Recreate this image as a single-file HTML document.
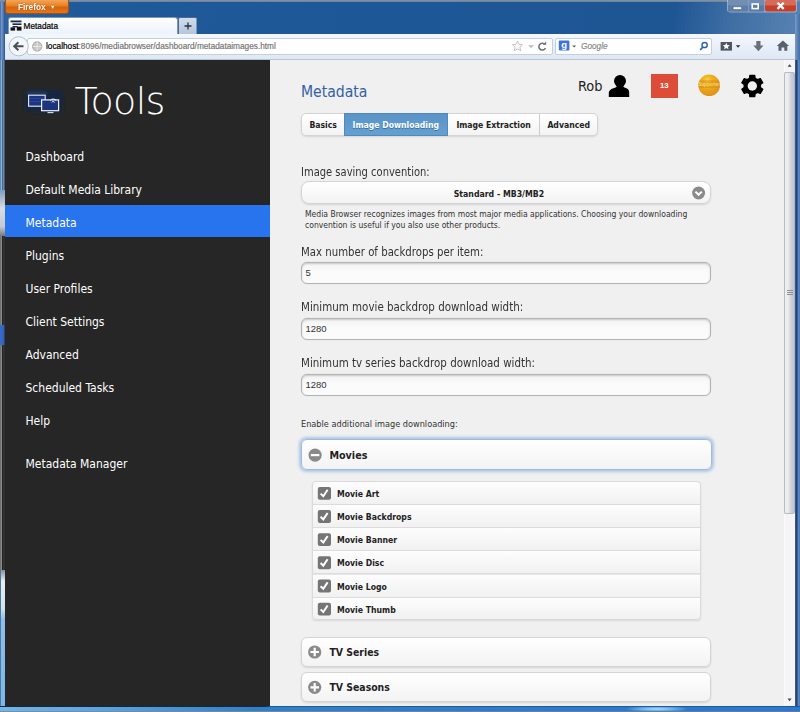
<!DOCTYPE html>
<html lang="en"><head><meta charset="utf-8"><title>Metadata</title>
<style>
*{box-sizing:border-box;margin:0;padding:0}
html,body{width:800px;height:712px;overflow:hidden}
body{position:relative;background:#1e5694;font-family:"DejaVu Sans Condensed","DejaVu Sans","Liberation Sans",sans-serif;color:#333}
.a{position:absolute;white-space:nowrap}
/* ---------- window chrome ---------- */
#titlebar{left:0;top:0;width:800px;height:36px;background:linear-gradient(100deg,#2c64a4 0,#1f5997 10%,#1e5694 84%,#3f6ea4 91%,#5882b2 100%)}
#topline{left:0;top:0;width:800px;height:2.2px;background:linear-gradient(#8e99a6,#6f86a3);opacity:.9}
#ffbtn{left:4.5px;top:0;width:64.5px;height:13.5px;border-radius:0 0 3px 3px;background:linear-gradient(#f3a55a,#e8801f 45%,#d9620c 55%,#e07a1c);border:1px solid #a8500c;border-top:0;color:#fff;font:bold 8.3px/12px "Liberation Sans",sans-serif;text-shadow:0 0 1px #8a3c00}
#tab{left:7.6px;top:16.8px;width:170px;height:19px;border-radius:3px 3px 0 0;background:linear-gradient(#fdfeff,#eaf1f9);border:1px solid #7f97b5;border-bottom:0}
#newtab{left:178px;top:17px;width:19px;height:17px;border-radius:2px 2px 0 0;background:linear-gradient(#cfdcec,#b4c6dc);border:1px solid #4d6c94;border-bottom:0;border-right-color:#7f99b9}
#navbar{left:5px;top:34px;width:789.6px;height:25.5px;background:linear-gradient(#f4f8fd,#e6eef8 60%,#dfe8f4);border-bottom:1px solid #b9c4d3}
.field{background:#fff;border:1px solid #c3cfdf;border-radius:2px}
.chrometxt{font-family:"Liberation Sans",sans-serif;font-size:8.25px;color:#000;-webkit-text-stroke:.2px currentColor}
/* ---------- page ---------- */
#side{left:5px;top:59.5px;width:265px;height:646.5px;background:#262626}
#main{left:270px;top:59.5px;width:514px;height:646.5px;background:#f0f0f0}
.nav{left:20.5px;color:#fff;font-size:12px;line-height:16px}
#sel{left:0;top:145.5px;width:265px;height:32px;background:#2874ee}
.lbl{font-size:12.4px;line-height:14px;color:#333;transform-origin:0 0;transform:scaleX(.912)}
.inp{left:300.5px;width:410.5px;height:22px;border:1px solid #b4b4b4;border-radius:6px;background:linear-gradient(#f3f3f3,#fafafa 40%,#fbfbfb);box-shadow:inset 0 1px 2px rgba(0,0,0,.18),0 0 1px #c4c4c4}
.inp span{position:absolute;left:4px;top:3.7px;font:9.5px/12px "Liberation Sans",sans-serif;color:#333}
.btn{border:1px solid #d4d4d4;border-radius:6px;background:linear-gradient(#ffffff,#f3f3f3);box-shadow:0 1px 2px rgba(0,0,0,.12)}
.b{font-weight:bold;color:#222}
.hlp{font-size:8.5px;line-height:11px;color:#333}
</style></head><body>
<div class="a" id="titlebar"></div>
<div class="a" id="topline"></div>
<div class="a" id="ffbtn"><span class="a" style="left:12.5px;top:1.3px;transform:scaleY(1.12);transform-origin:0 100%">Firefox</span><span class="a" style="left:44.5px;top:.6px;font-size:5.5px">&#9660;</span></div>
<div class="a" id="tab"><span class="a chrometxt" style="left:15px;top:4px">Metadata</span></div>
<div class="a" id="newtab"></div>
<div class="a" id="navbar"></div>
<div class="a field" style="left:27px;top:38px;width:525.5px;height:16.5px"><span class="a chrometxt" style="left:18px;top:3px">localhost<span style="color:#777">:8096/mediabrowser/dashboard/metadataimages.html</span></span></div>
<div class="a field" style="left:555px;top:38px;width:157px;height:16.5px"><span class="a chrometxt" style="left:25px;top:3px;color:#8a8a8a;font-style:italic">Google</span></div>

<div class="a" id="side">
  <div class="a" style="left:69.5px;top:16.5px;font:38px/50px 'DejaVu Sans Light','DejaVu Sans',sans-serif;font-weight:200;color:#fff;letter-spacing:-0.7px">Tools</div>
  <div class="a" id="sel"></div>
  <div class="a nav" style="top:89.60px">Dashboard</div>
  <div class="a nav" style="top:122.52px">Default Media Library</div>
  <div class="a nav" style="top:155.45px">Metadata</div>
  <div class="a nav" style="top:188.38px">Plugins</div>
  <div class="a nav" style="top:221.30px">User Profiles</div>
  <div class="a nav" style="top:254.22px">Client Settings</div>
  <div class="a nav" style="top:287.15px">Advanced</div>
  <div class="a nav" style="top:320.07px">Scheduled Tasks</div>
  <div class="a nav" style="top:353.00px">Help</div>
  <div class="a nav" style="top:396.8px">Metadata Manager</div>
</div>
<div class="a" id="main"></div>

<div class="a" style="left:301px;top:81.5px;font-size:15.6px;line-height:20px;color:#3361a3">Metadata</div>
<div class="a" style="left:578px;top:77px;font-size:14.4px;line-height:18px;color:#222">Rob</div>
<div class="a" style="left:650.5px;top:73.75px;width:27.5px;height:24px;background:#dd4b39;color:#fff;font:bold 7.8px/24px 'Liberation Sans',sans-serif;text-align:center">13</div>

<!-- tabs -->
<div class="a btn" style="left:301px;top:113px;width:297px;height:22.5px;border-radius:5px"></div>
<div class="a" style="left:344px;top:113px;width:104px;height:22.5px;background:linear-gradient(#5a93c8,#669fd0);border:1px solid #4f89bf"></div>
<div class="a" style="left:539px;top:114px;width:1px;height:20.5px;background:#ccc"></div>
<div class="a b" style="left:309.4px;top:119px;font-size:8.6px;line-height:12px">Basics</div>
<div class="a b" style="left:352.6px;top:119px;font-size:8.6px;line-height:12px;color:#fff;text-shadow:0 1px 0 #3373a5">Image Downloading</div>
<div class="a b" style="left:456.4px;top:119px;font-size:8.6px;line-height:12px">Image Extraction</div>
<div class="a b" style="left:547.4px;top:119px;font-size:8.6px;line-height:12px">Advanced</div>

<div class="a lbl" style="left:301px;top:165px;transform:scaleX(.893)">Image saving convention:</div>
<div class="a btn" style="left:300.5px;top:181px;width:410.5px;height:23px;border-radius:8px"></div>
<div class="a b" style="left:453.7px;top:187.7px;font-size:8.7px;line-height:12px">Standard - MB3/MB2</div>
<div class="a hlp" style="left:305px;top:208.5px">Media Browser recognizes images from most major media applications. Choosing your downloading</div>
<div class="a hlp" style="left:305px;top:220.2px">convention is useful if you also use other products.</div>

<div class="a lbl" style="left:301px;top:245.2px">Max number of backdrops per item:</div>
<div class="a inp" style="top:262px"><span>5</span></div>
<div class="a lbl" style="left:301px;top:299.5px;transform:scaleX(.925)">Minimum movie backdrop download width:</div>
<div class="a inp" style="top:318px"><span>1280</span></div>
<div class="a lbl" style="left:301px;top:355.5px;transform:scaleX(.923)">Minimum tv series backdrop download width:</div>
<div class="a inp" style="top:374px"><span>1280</span></div>

<div class="a" style="left:301px;top:418px;font-size:9.1px;line-height:12px;color:#333">Enable additional image downloading:</div>
<div class="a btn" style="left:301px;top:438.6px;width:410.5px;height:31.4px;border:1.8px solid #9fbbdb;box-shadow:0 0 3px 1.6px #aec6e4"></div>
<div class="a b" style="left:329.4px;top:449.2px;font-size:10.7px;line-height:14px">Movies</div>

<div class="a" style="left:312px;top:481px;width:388.5px;height:138.5px;border:1px solid #dadada;border-radius:4px;background:repeating-linear-gradient(#fdfdfd 0,#f1f1f1 22px,#dcdcdc 22px,#dcdcdc 23px,#fdfdfd 23.15px);box-shadow:0 1px 2px rgba(0,0,0,.1)"></div>

<div class="a btn" style="left:301px;top:637px;width:410px;height:29.5px"></div>
<div class="a b" style="left:329.4px;top:645px;font-size:10.4px;line-height:14px">TV Series</div>
<div class="a btn" style="left:301px;top:672px;width:410px;height:29.5px"></div>
<div class="a b" style="left:329.4px;top:680px;font-size:10.4px;line-height:14px">TV Seasons</div>

<div class="a b" style="left:337px;top:488.00px;font-size:8.65px;line-height:12px">Movie Art</div>
<div class="a b" style="left:337px;top:511.15px;font-size:8.65px;line-height:12px">Movie Backdrops</div>
<div class="a b" style="left:337px;top:534.30px;font-size:8.65px;line-height:12px">Movie Banner</div>
<div class="a b" style="left:337px;top:557.45px;font-size:8.65px;line-height:12px">Movie Disc</div>
<div class="a b" style="left:337px;top:580.60px;font-size:8.65px;line-height:12px">Movie Logo</div>
<div class="a b" style="left:337px;top:603.75px;font-size:8.65px;line-height:12px">Movie Thumb</div>
<!-- scrollbar / frame -->
<div class="a" style="left:783.5px;top:59.5px;width:11.5px;height:647px;background:#f7f4f7;border-left:1px solid #fbfbfd"></div>
<div class="a" style="left:784px;top:71.5px;width:10.8px;height:442px;border:1px solid #b4bcbf;border-right-color:#a9b6d2;border-radius:2px;background:linear-gradient(90deg,#eaf0f4 0,#ececec 35%,#d6d2d6 62%,#b9c0d8 100%)"></div>
<div class="a" style="left:786.5px;top:290px;width:6px;height:1px;background:#8a8f98;box-shadow:0 2px 0 #8a8f98,0 4px 0 #8a8f98"></div>
<div class="a" style="left:794.8px;top:14px;width:5.2px;height:698px;background:linear-gradient(90deg,#5c7296 0,#22406e 18%,#23457a 42%,#5a86c0 62%,#5a88c2 80%,#4472ac 100%)"></div>
<div class="a" style="left:794.8px;top:14px;width:5.2px;height:46px;background:linear-gradient(90deg,#7f9dc4 0,#5a82b4 50%,#446fa6 100%)"></div>
<div class="a" style="left:0;top:2px;width:5px;height:58px;background:linear-gradient(90deg,#3e66a0 0,#7497c8 30%,#4c74b2 70%,#2c4d85 100%)"></div>
<div class="a" style="left:0;top:59.5px;width:5px;height:647px;background:linear-gradient(90deg,#666 0,#888 30%,#1c1c1c 45%,#363636 65%,#2a2a2a 100%)"></div>
<div class="a" style="left:0;top:59.5px;width:5px;height:140px;background:linear-gradient(90deg,#4876a6 0,#88b2da 30%,#4a6c94 50%,#6888a8 70%,#38485e 100%)"></div>
<div class="a" style="left:0;top:190px;width:4.5px;height:46px;background:linear-gradient(#7f9bbd,#d9dde4 40%,#c4c9d2 80%,#777)"></div>
<div class="a" style="left:0;top:325px;width:5px;height:20px;background:linear-gradient(90deg,#3a6ac8,#3463b8 70%,#23324e)"></div>
<div class="a" style="left:0;top:570px;width:4.5px;height:137px;background:linear-gradient(#8a8f96 0,#e8ecef 8%,#d5e4e6 28%,#8fc0e6 36%,#7ab6e6 100%);border-left:1px solid #4a7aa8"></div>
<div class="a" style="left:0;top:706px;width:800px;height:6px;background:linear-gradient(90deg,#6db6ee 0,#58a6e6 12%,#2f80cc 32%,#2a78d0 100%)"></div>
<div class="a" style="left:627px;top:706px;width:60px;height:6px;background:radial-gradient(ellipse at center,#a8dcff 0,#6fb4f0 35%,rgba(42,120,208,0) 75%)"></div>
<div class="a" style="left:0;top:706px;width:800px;height:1.4px;background:linear-gradient(90deg,#1d2530 0,#1d2530 33%,#1f5aa0 34%,#1f5aa0 100%)"></div>
<div class="a" style="left:0;top:710.6px;width:800px;height:1.4px;background:linear-gradient(90deg,#8a8a8a,#6a7a8c)"></div>
<!-- chrome icons -->
<svg class="a" style="left:0;top:0" width="800" height="62" viewBox="0 0 800 62">
  <!-- window controls -->
  <rect x="727" y="-2" width="70" height="14.6" rx="3" fill="#dfe8f3" opacity=".5"/>
  <rect x="728" y="0" width="20.4" height="11.6" fill="#5f7ea8"/>
  <rect x="728" y="0" width="20.4" height="5.5" fill="#8099bb" opacity=".6"/>
  <rect x="749.2" y="0" width="15" height="11.6" fill="#5a7aa5"/>
  <rect x="749.2" y="0" width="15" height="5.5" fill="#7d97ba" opacity=".6"/>
  <rect x="765" y="0" width="31" height="11.6" rx="2" fill="#c53f2b"/>
  <rect x="765" y="0" width="31" height="5.5" fill="#e08a78" opacity=".6"/>
  <rect x="733" y="6.8" width="8.6" height="2.8" rx="1" fill="#fff" stroke="#3a4a60" stroke-width=".5"/>
  <rect x="752.2" y="4" width="6" height="4.6" fill="none" stroke="#fff" stroke-width="1.6"/>
  <path d="M777.5,2.8 L783.7,8.9 M783.7,2.8 L777.5,8.9" stroke="#fff" stroke-width="2.2"/>
  <!-- favicon -->
  <g fill="#1b2a4a"><rect x="10.5" y="20.5" width="11" height="1.8"/><rect x="12.5" y="23.4" width="9" height="1.6"/><rect x="12.5" y="26" width="5" height="1.4"/><rect x="10.5" y="27.4" width="4.6" height="3.2" fill="#111"/><rect x="16.8" y="26.6" width="4.7" height="4" fill="#111"/></g>
  <!-- new tab plus -->
  <path d="M184.5,26 h7 M188,22.5 v7" stroke="#2a3340" stroke-width="1.3"/>
  <!-- back button -->
  <circle cx="18.7" cy="46.3" r="9.6" fill="#f3f6fb" stroke="#b4bfce" stroke-width="1"/>
  <path d="M23.5,46.3 H14.5 M18.4,42.3 L14.2,46.3 L18.4,50.3" fill="none" stroke="#4a4f58" stroke-width="2"/>
  <!-- globe -->
  <circle cx="37.2" cy="46.5" r="4.7" fill="#c9c9c9" stroke="#9a9a9a" stroke-width=".8"/>
  <path d="M32.7,46.5 h9 M37.2,42 v9" stroke="#eee" stroke-width=".8"/>
  <!-- star, dropdown, reload -->
  <path d="M517.5,41 l1.5,3.4 3.6,.3 -2.7,2.5 .8,3.6 -3.2,-1.9 -3.2,1.9 .8,-3.6 -2.7,-2.5 3.6,-.3z" fill="#fafafa" stroke="#c3c3c3" stroke-width="1"/>
  <path d="M528,45 h6 l-3,3.6z" fill="#c4c4c4"/>
  <path d="M545,44.6 a3.4,3.4 0 1 0 .4,3.4" fill="none" stroke="#6f7680" stroke-width="1.6"/><path d="M542.6,44.8 h3.6 v-3.4z" fill="#6f7680"/>
  <!-- google icon -->
  <rect x="558.8" y="40.6" width="10.6" height="10" rx="1" fill="#3f73dc"/><text x="564.1" y="48.4" font-family="Liberation Sans, sans-serif" font-size="9.5" font-weight="bold" fill="#fff" text-anchor="middle">g</text>
  <path d="M572.3,45.4 h3.8 l-1.9,2.2z" fill="#555"/>
  <!-- magnifier -->
  <circle cx="704.6" cy="45" r="2.6" fill="none" stroke="#2f62b4" stroke-width="1.5"/><path d="M702.8,47 L700.2,50" stroke="#2f62b4" stroke-width="1.8"/>
  <!-- bookmarks -->
  <rect x="720.6" y="42" width="11.4" height="8.6" fill="#4e5560"/>
  <path d="M726.3,42.8 l1,2.3 2.4,.2 -1.8,1.6 .6,2.4 -2.2,-1.3 -2.2,1.3 .6,-2.4 -1.8,-1.6 2.4,-.2z" fill="#fff"/>
  <path d="M735.8,45.2 h4.6 l-2.3,2.6z" fill="#333"/>
  <!-- download -->
  <path d="M756.3,41 h4.2 v4.6 h3 l-5.1,5.6 -5.1,-5.6 h3z" fill="#6a707a"/>
  <!-- home -->
  <path d="M782.9,40.4 l6.2,5.6 h-1.8 v4.8 h-3 v-3.2 h-2.8 v3.2 h-3 v-4.8 h-1.8z" fill="#5b616b"/>
</svg>

<!-- page icons -->
<svg class="a" style="left:0;top:60px" width="800" height="652" viewBox="0 60 800 652">
  <!-- logo -->
  <defs><filter id="bl" x="-20%" y="-20%" width="140%" height="140%"><feGaussianBlur stdDeviation="1.6"/></filter></defs>
  <rect x="25" y="90" width="38" height="22" rx="2" fill="#17253f" filter="url(#bl)"/>
  <rect x="27" y="91.5" width="20" height="4" fill="#2d4a78" opacity=".55" filter="url(#bl)"/>
  <rect x="28.6" y="95.2" width="16.6" height="11" fill="#1d3580" stroke="#e3ebff" stroke-width="1.1"/>
  <path d="M30,98.5 h14 M30,101.5 h14" stroke="#2a4796" stroke-width="1"/>
  <rect x="41.6" y="99.9" width="17" height="10.8" fill="#1c357c" stroke="#eef3ff" stroke-width="1.2"/>
  <path d="M47.5,112.6 h6" stroke="#d8e2f6" stroke-width="1.1"/>
  <path d="M50.2,100.6 a3.6,3.6 0 0 1 6,0 M51.7,102.4 a1.8,1.8 0 0 1 3,0" fill="none" stroke="#fff" stroke-width=".9"/>
  <!-- user -->
  <circle cx="620" cy="80.9" r="6" fill="#000"/>
  <path d="M608.8,96.9 V93.4 C608.8,90.2 611.3,88.9 615.6,87.6 L617.2,85.8 H622.8 L624.4,87.6 C628.7,88.9 629.2,90.2 629.2,93.4 V96.9Z" fill="#000"/>
  <!-- coin -->
  <defs>
    <radialGradient id="cg" cx=".42" cy=".3" r=".75"><stop offset="0" stop-color="#f9dc3c"/><stop offset=".3" stop-color="#efb424"/><stop offset=".7" stop-color="#e59c1a"/><stop offset="1" stop-color="#dc9018"/></radialGradient>
    <clipPath id="cc"><circle cx="709.2" cy="85.3" r="10.8"/></clipPath>
  </defs>
  <circle cx="709.2" cy="85.3" r="10.8" fill="url(#cg)"/>
  <rect x="698" y="80.2" width="23" height="7.8" fill="#d88c16" opacity=".55" clip-path="url(#cc)"/>
  <text x="709.2" y="86" font-family="Liberation Sans, sans-serif" font-size="4.6" font-weight="bold" fill="#f6d868" text-anchor="middle" clip-path="url(#cc)">Supporter</text>
  <!-- gear -->
  <path d="M755.14,78.20 L754.77,75.28 L749.83,75.28 L749.46,78.20 L746.96,79.64 L744.26,78.50 L741.78,82.78 L744.13,84.56 L744.13,87.44 L741.78,89.22 L744.26,93.50 L746.96,92.36 L749.46,93.80 L749.83,96.72 L754.77,96.72 L755.14,93.80 L757.64,92.36 L760.34,93.50 L762.82,89.22 L760.47,87.44 L760.47,84.56 L762.82,82.78 L760.34,78.50 L757.64,79.64Z" fill="#000" stroke="#000" stroke-width="1.2" stroke-linejoin="round"/>
  <circle cx="752.3" cy="86" r="4.7" fill="#f0f0f0"/>
  <!-- select arrow -->
  <circle cx="698.6" cy="193" r="6.5" fill="#8a8a8a"/>
  <path d="M695.4,191.6 L698.6,194.8 L701.8,191.6" fill="none" stroke="#fff" stroke-width="2"/>
  <!-- collapsible icons -->
  <circle cx="315.1" cy="455.1" r="6.6" fill="#8a8a8a"/><rect x="310.8" y="454" width="8.6" height="2.2" fill="#fff"/>
  <circle cx="314.7" cy="652" r="6.6" fill="#8a8a8a"/><path d="M310.4,652 h8.6 M314.7,647.7 v8.6" stroke="#fff" stroke-width="2.2"/>
  <circle cx="314.7" cy="687.3" r="6.6" fill="#8a8a8a"/><path d="M310.4,687.3 h8.6 M314.7,683 v8.6" stroke="#fff" stroke-width="2.2"/>
  <!-- checkboxes -->
  <g transform="translate(0,0.00)"><rect x="317.8" y="486.9" width="13.2" height="12.9" rx="2" fill="#757575"/><path d="M320.6,493.6 L323.3,496.2 L327.6,489.8" fill="none" stroke="#fff" stroke-width="2"/></g>
  <g transform="translate(0,23.15)"><rect x="317.8" y="486.9" width="13.2" height="12.9" rx="2" fill="#757575"/><path d="M320.6,493.6 L323.3,496.2 L327.6,489.8" fill="none" stroke="#fff" stroke-width="2"/></g>
  <g transform="translate(0,46.30)"><rect x="317.8" y="486.9" width="13.2" height="12.9" rx="2" fill="#757575"/><path d="M320.6,493.6 L323.3,496.2 L327.6,489.8" fill="none" stroke="#fff" stroke-width="2"/></g>
  <g transform="translate(0,69.45)"><rect x="317.8" y="486.9" width="13.2" height="12.9" rx="2" fill="#757575"/><path d="M320.6,493.6 L323.3,496.2 L327.6,489.8" fill="none" stroke="#fff" stroke-width="2"/></g>
  <g transform="translate(0,92.60)"><rect x="317.8" y="486.9" width="13.2" height="12.9" rx="2" fill="#757575"/><path d="M320.6,493.6 L323.3,496.2 L327.6,489.8" fill="none" stroke="#fff" stroke-width="2"/></g>
  <g transform="translate(0,115.75)"><rect x="317.8" y="486.9" width="13.2" height="12.9" rx="2" fill="#757575"/><path d="M320.6,493.6 L323.3,496.2 L327.6,489.8" fill="none" stroke="#fff" stroke-width="2"/></g>
  <!-- scrollbar -->
  <path d="M787.6,66.8 l2,-2.6 2,2.6z" fill="#444"/>
  <path d="M787.6,698.6 l2,2.6 2,-2.6z" fill="#444"/>
</svg>
</body></html>
